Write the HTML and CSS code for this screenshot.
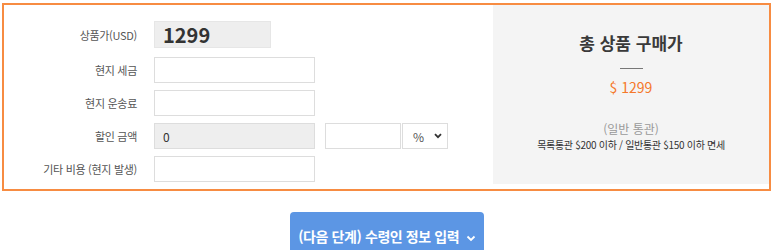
FILE: index.html
```html
<!DOCTYPE html>
<html lang="ko">
<head>
    <meta charset="UTF-8">
    <meta name="viewport" content="width=device-width, initial-scale=1.0">
    <title>상품 구매가 계산</title>
    <link rel="stylesheet" href="styles.css">
</head>
<body>

    <div class="page">
        <div class="price-box">
            <div class="price-form">
                <div class="form-row first">
                    <label>상품가(USD)</label>
                    <input type="text" class="price-input" value="1299" readonly>
                </div>
                <div class="form-row">
                    <label>현지 세금</label>
                    <input type="text" class="field">
                </div>
                <div class="form-row">
                    <label>현지 운송료</label>
                    <input type="text" class="field">
                </div>
                <div class="form-row">
                    <label>할인 금액</label>
                    <input type="text" class="field readonly" value="0" readonly>
                    <input type="text" class="field small">
                    <div class="unit-select">
                        <span>%</span>
                        <svg width="8" height="6" viewBox="0 0 8 6"><path d="M1 1.2 L4 4.2 L7 1.2" fill="none" stroke="#333" stroke-width="1.8"/></svg>
                    </div>
                </div>
                <div class="form-row">
                    <label>기타 비용 (현지 발생)</label>
                    <input type="text" class="field">
                </div>
            </div>

            <div class="summary">
                <h3>총 상품 구매가</h3>
                <div class="divider"></div>
                <div class="total">$ 1299</div>
                <p class="customs-type">(일반 통관)</p>
                <p class="customs-note">목록통관 $200 이하 / 일반통관 $150 이하 면세</p>
            </div>
        </div>

        <div class="actions">
            <button class="next-btn">(다음 단계) 수령인 정보 입력
                <svg width="10" height="7" viewBox="0 0 10 7"><path d="M1.5 1.5 L5 5 L8.5 1.5" fill="none" stroke="#fff" stroke-width="1.8"/></svg>
            </button>
        </div>
    </div>

</body>
</html>
```

FILE: styles.css
```css
body {
    margin: 0;
    font-family: "Noto Sans CJK KR", "Noto Sans", sans-serif;
    background-color: #fff;
    color: #333;
}

.page {
    padding: 3px 2px 0 2px;
}

.price-box {
    display: flex;
    align-items: flex-start;
    border: 2px solid #f78c42;
}

.price-form {
    width: 489px;
    padding: 16px 0 7px 0;
    display: flex;
    flex-direction: column;
    gap: 7px;
}

.form-row {
    display: flex;
    align-items: center;
    height: 26px;
}

.form-row.first {
    height: 27px;
    margin-bottom: 2px;
}

.form-row label {
    width: 133px;
    margin-right: 17px;
    text-align: right;
    font-size: 11px;
    color: #555;
    letter-spacing: -0.3px;
}

input {
    box-sizing: border-box;
    font-family: inherit;
    outline: none;
}

.price-input {
    width: 117px;
    height: 27px;
    border: 1px solid #e6e6e6;
    background-color: #eee;
    font-size: 20px;
    font-weight: bold;
    color: #333;
    padding: 0 0 0 8px;
}

.field {
    width: 161px;
    height: 26px;
    border: 1px solid #ddd;
    background-color: #fff;
    font-size: 12px;
    color: #333;
    padding: 0 8px;
}

.field.readonly {
    background-color: #eee;
}

.field.small {
    width: 76px;
    margin-left: 10px;
}

.unit-select {
    box-sizing: border-box;
    width: 46px;
    height: 26px;
    margin-left: 1px;
    border: 1px solid #ddd;
    display: flex;
    align-items: center;
    justify-content: space-between;
    padding: 0 5px 0 10px;
    font-size: 12px;
    color: #555;
}

.summary {
    flex: 1;
    height: 179px;
    background-color: #f4f4f4;
    text-align: center;
    box-sizing: border-box;
    padding-top: 26px;
}

.summary h3 {
    margin: 0;
    font-size: 17px;
    font-weight: bold;
    color: #3a3a3a;
    line-height: 24px;
}

.divider {
    width: 23px;
    height: 1px;
    background-color: #777;
    margin: 13px auto 9px auto;
}

.total {
    color: #f5782a;
    font-size: 14px;
    line-height: 18px;
}

.customs-type {
    margin: 25px 0 0 0;
    font-size: 12px;
    color: #999;
    line-height: 16px;
}

.customs-note {
    margin: 0;
    font-size: 10px;
    color: #333;
    line-height: 16px;
    letter-spacing: -0.3px;
}

.actions {
    text-align: center;
    margin-top: 21px;
}

.next-btn {
    width: 194px;
    height: 48px;
    background-color: #5c96e4;
    color: #fff;
    border: none;
    border-radius: 4px;
    font-family: inherit;
    font-size: 14px;
    font-weight: bold;
    cursor: pointer;
    margin-left: 1px;
    letter-spacing: -0.4px;
}

.next-btn svg {
    margin-left: 3px;
}
```
